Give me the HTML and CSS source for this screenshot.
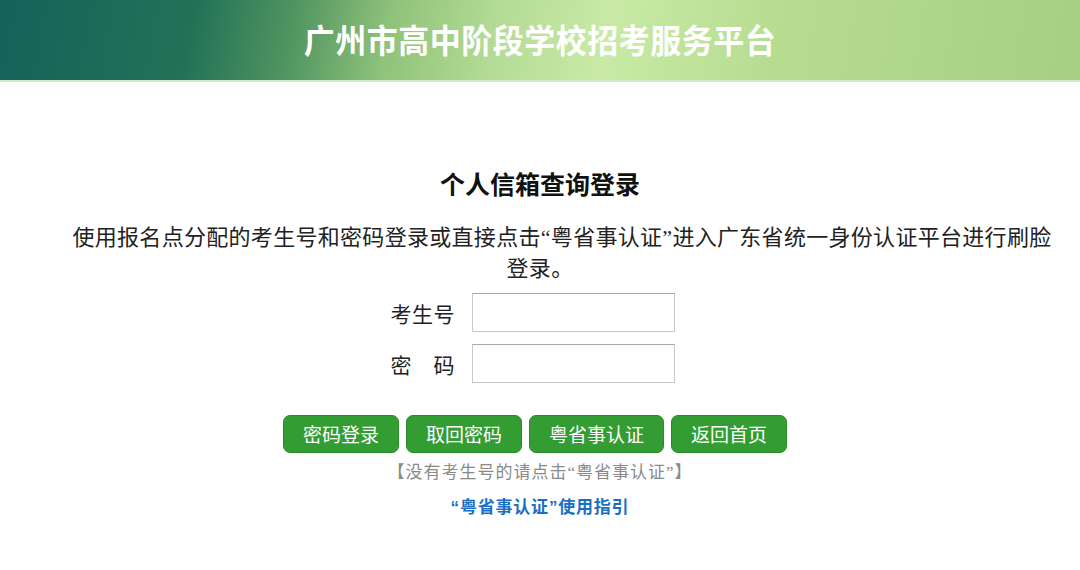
FILE: index.html
```html
<!DOCTYPE html>
<html lang="zh-CN">
<head>
<meta charset="utf-8">
<title>个人信箱查询登录</title>
<link rel="stylesheet" href="styles.css">
</head>
<body>
<header class="banner">
  <h1 class="banner-title">广州市高中阶段学校招考服务平台</h1>
</header>
<main class="login">
  <h2 class="login-title">个人信箱查询登录</h2>
  <p class="login-intro">使用报名点分配的考生号和密码登录或直接点击“粤省事认证”进入广东省统一身份认证平台进行刷脸登录。</p>
  <form class="login-form">
    <div class="field">
      <label class="field-label" for="ksh">考生号</label>
      <input class="field-input" id="ksh" type="text">
    </div>
    <div class="field">
      <label class="field-label" for="mm">密&emsp;码</label>
      <input class="field-input" id="mm" type="password">
    </div>
    <div class="actions">
      <button type="button" class="btn">密码登录</button>
      <button type="button" class="btn">取回密码</button>
      <button type="button" class="btn">粤省事认证</button>
      <button type="button" class="btn">返回首页</button>
    </div>
  </form>
  <p class="hint">【没有考生号的请点击“粤省事认证”】</p>
  <a class="guide" href="#">“粤省事认证”使用指引</a>
</main>
</body>
</html>
```
FILE: styles.css
```css
* { box-sizing: border-box; }

html, body {
  margin: 0;
  padding: 0;
  background: #fff;
}

/* Latin face first so curly quotes stay narrow; CJK falls through to Noto */
body {
  font-family: "Liberation Serif", "Noto Sans CJK SC", serif;
  color: #222;
}

.banner {
  height: 82px;
  border-bottom: 2px solid #d4ead0;
  background:
    linear-gradient(100deg,
      #14625a 0%,
      #237257 18%,
      #4f9460 27%,
      #8fc27a 36%,
      #b4dc96 46%,
      #c8eaa6 56%,
      #b6dc90 72%,
      #a6cf82 100%);
  display: flex;
  align-items: center;
  justify-content: center;
}

.banner-title {
  margin: 0;
  color: #fff;
  font-family: "Noto Sans CJK SC", sans-serif;
  font-size: 31px;
  font-weight: 700;
  letter-spacing: 0.5px;
  line-height: 1;
  padding-bottom: 4px;
  transform: scaleY(1.08);
}

.login {
  display: flex;
  flex-direction: column;
  align-items: center;
  padding-top: 84px;
}

.login-title {
  margin: 0;
  font-family: "Noto Sans CJK SC", sans-serif;
  font-size: 25px;
  font-weight: 700;
  color: #111;
  line-height: 34px;
}

.login-intro {
  width: 1030px;
  margin: 22px 0 0;
  font-size: 22px;
  line-height: 31px;
  letter-spacing: 0.3px;
  text-align: center;
  text-indent: 2em;
  color: #222;
}

.login-form {
  display: flex;
  flex-direction: column;
  align-items: center;
  margin-top: 9px;
}

.field {
  display: flex;
  align-items: center;
  gap: 17px;
  margin-bottom: 12px;
  margin-left: -16px;
}

.field-label {
  width: 66px;
  font-family: "Noto Sans CJK SC", sans-serif;
  font-size: 21px;
  letter-spacing: 0.5px;
  color: #222;
  text-align: right;
  white-space: nowrap;
}

.field-input {
  width: 203px;
  height: 39px;
  border: 1px solid #c8c8c8;
  border-top-color: #a8a8a8;
  padding: 0 6px;
  font-size: 16px;
  background: #fff;
}

.actions {
  display: flex;
  gap: 7px;
  margin-top: 20px;
  margin-right: 10px;
}

.btn {
  height: 38px;
  padding: 0 19px;
  border: 1px solid #2a8a2a;
  border-radius: 7px;
  background: #339c33;
  color: #fff;
  font-family: "Noto Sans CJK SC", sans-serif;
  font-size: 19px;
  line-height: 36px;
  cursor: pointer;
}

.hint {
  margin: 8px 0 0;
  font-size: 17px;
  line-height: 24px;
  letter-spacing: 1px;
  color: #8a8a8a;
}

.guide {
  margin-top: 11px;
  font-family: "Liberation Sans", "Noto Sans CJK SC", sans-serif;
  font-size: 17px;
  font-weight: 700;
  letter-spacing: 0.8px;
  color: #1a6fc4;
  text-decoration: none;
  line-height: 24px;
}
```
